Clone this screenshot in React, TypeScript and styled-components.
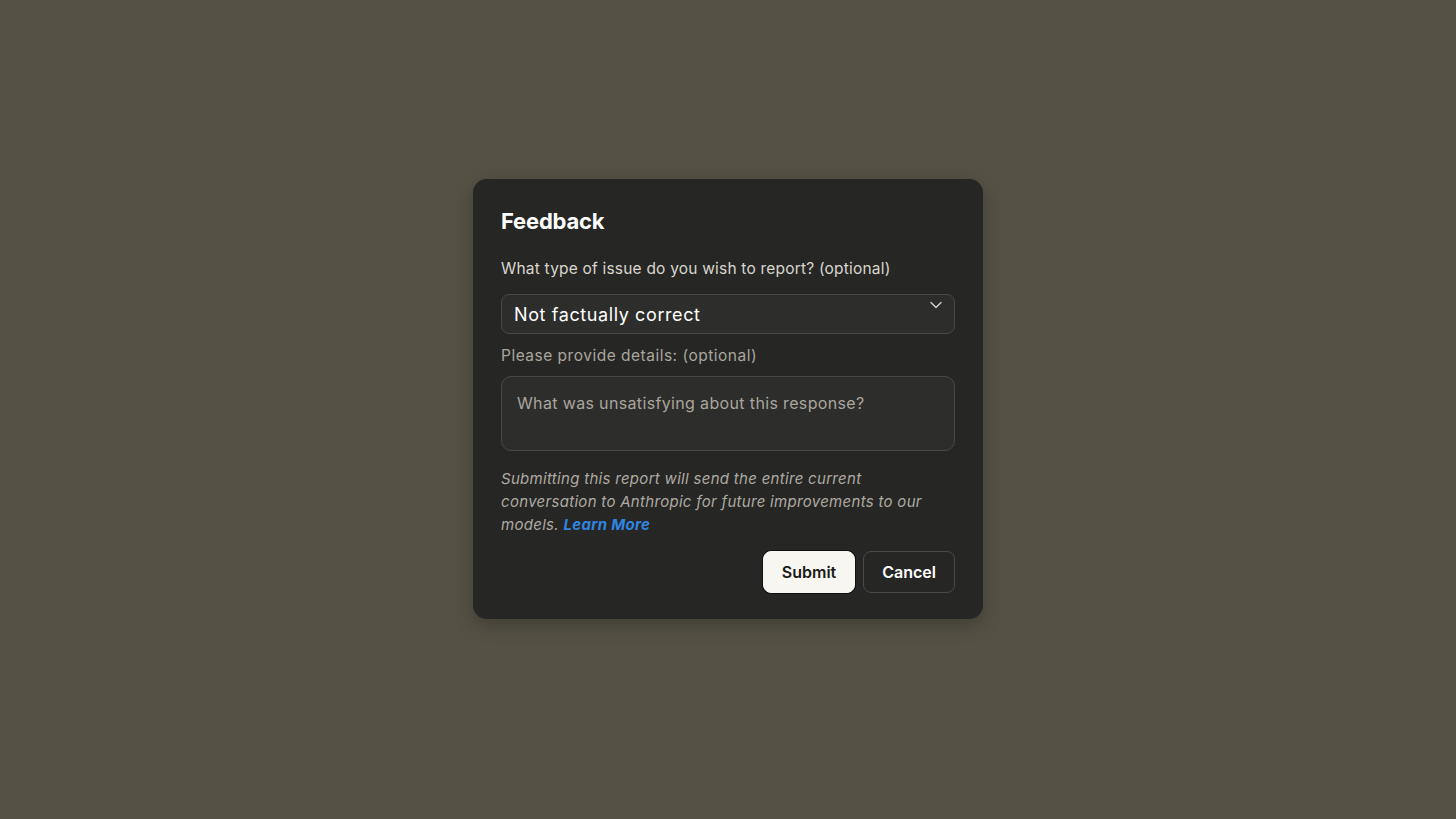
import React from "react";
import styled, { createGlobalStyle } from "styled-components";

const GlobalStyle = createGlobalStyle`
  html, body {
    margin: 0;
    padding: 0;
    height: 100%;
    background: #555145;
  }
  #root {
    height: 100%;
  }
  * {
    box-sizing: border-box;
  }
`;

const Page = styled.div`
  width: 100%;
  height: 100vh;
  display: flex;
  align-items: center;
  justify-content: center;
  background: #555145;
  font-family: "Inter", "Liberation Sans", sans-serif;
`;

const Dialog = styled.div`
  width: 510px;
  margin-top: -21px;
  padding: 26px 28px 26px 28px;
  background: #262624;
  border-radius: 14px;
  box-shadow: 0 6px 18px rgba(0, 0, 0, 0.25);
  display: flex;
  flex-direction: column;
`;

const Title = styled.h2`
  margin: 0 0 22px 0;
  font-size: 22px;
  font-weight: 700;
  color: #ffffff;
  line-height: 32px;
  letter-spacing: -0.2px;
`;

const Label = styled.label<{ $muted?: boolean }>`
  display: block;
  font-size: 15.5px;
  line-height: 20px;
  letter-spacing: ${(p) => (p.$muted ? "0.5px" : "0.2px")};
  color: ${(p) => (p.$muted ? "#a9a69e" : "#d9d6cf")};
  margin-bottom: ${(p) => (p.$muted ? "10px" : "15px")};
`;

const SelectBox = styled.div`
  position: relative;
  height: 40px;
  border: 1px solid #4a4946;
  border-radius: 8px;
  background: #2d2d2b;
  display: flex;
  align-items: center;
  padding: 0 12px;
  margin-bottom: 12px;
`;

const SelectText = styled.span`
  font-size: 18px;
  color: #ffffff;
  letter-spacing: 0.6px;
`;

const Chevron = styled.svg`
  position: absolute;
  right: 12px;
  top: 6px;
`;

const TextArea = styled.div`
  height: 75px;
  border: 1px solid #4a4946;
  border-radius: 10px;
  background: #2d2d2b;
  padding: 16px 15px;
  font-size: 16px;
  letter-spacing: 0.35px;
  color: #a9a69e;
  margin-bottom: 16px;
`;

const Disclaimer = styled.p`
  margin: 0 0 15px 0;
  font-size: 15px;
  line-height: 23px;
  font-style: italic;
  color: #aeaaa2;
  letter-spacing: 0.3px;
`;

const LearnMore = styled.a`
  color: #2f85e0;
  font-weight: 700;
  text-decoration: none;
`;

const Actions = styled.div`
  display: flex;
  justify-content: flex-end;
  gap: 8px;
`;

const Button = styled.button<{ $primary?: boolean }>`
  height: 42px;
  padding: 0 18px;
  border-radius: 8px;
  font-family: inherit;
  font-size: 16px;
  font-weight: 600;
  cursor: pointer;
  background: ${(p) => (p.$primary ? "#f8f6f1" : "transparent")};
  color: ${(p) => (p.$primary ? "#1a1a18" : "#ffffff")};
  border: 1px solid ${(p) => (p.$primary ? "#f8f6f1" : "#4a4946")};
  box-shadow: ${(p) => (p.$primary ? "0 0 0 1px #111" : "none")};
`;

export default function App() {
  return (
    <>
      <GlobalStyle />
      <Page>
        <Dialog>
          <Title>Feedback</Title>
          <Label>What type of issue do you wish to report? (optional)</Label>
          <SelectBox>
            <SelectText>Not factually correct</SelectText>
            <Chevron width="12" height="8" viewBox="0 0 12 8" fill="none">
              <path
                d="M1 1.5 L6 6.5 L11 1.5"
                stroke="#d9d6cf"
                strokeWidth="1.3"
                strokeLinecap="round"
                strokeLinejoin="round"
              />
            </Chevron>
          </SelectBox>
          <Label $muted>Please provide details: (optional)</Label>
          <TextArea>What was unsatisfying about this response?</TextArea>
          <Disclaimer>
            Submitting this report will send the entire current conversation to
            Anthropic for future improvements to our models.{" "}
            <LearnMore href="#">Learn More</LearnMore>
          </Disclaimer>
          <Actions>
            <Button $primary>Submit</Button>
            <Button>Cancel</Button>
          </Actions>
        </Dialog>
      </Page>
    </>
  );
}
